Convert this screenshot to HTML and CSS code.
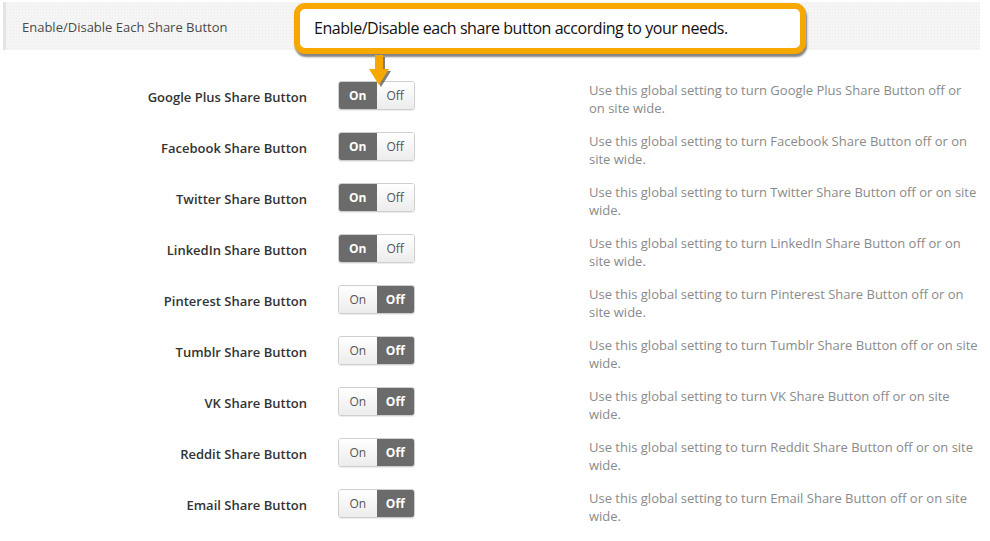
FILE: index.html
```html
<!DOCTYPE html>
<html lang="en">
<head>
<meta charset="UTF-8">
<meta name="viewport" content="width=device-width, initial-scale=1.0">
<title>Share Buttons</title>
<link rel="stylesheet" href="styles.css">
</head>
<body>
<div class="page">
    <div class="section-head">Enable/Disable Each Share Button</div>

    <div class="callout">
        <div class="callout-box">Enable/Disable each share button according to your needs.</div>
        <svg class="callout-arrow" width="26" height="34" viewBox="0 0 26 34">
            <path d="M7 0 h8 v14 h6 l-10 16 l-10 -16 h6 z" fill="#2a2a2a" opacity="0.6" transform="translate(2,2)"/>
            <path d="M7 0 h8 v14 h6 l-10 16 l-10 -16 h6 z" fill="#f7a800"/>
        </svg>
    </div>

    <div class="rows">
        <div class="row">
            <div class="label">Google Plus Share Button</div>
            <div class="toggle"><span class="seg active">On</span><span class="seg">Off</span></div>
            <div class="desc">Use this global setting to turn Google Plus Share Button off or on site wide.</div>
        </div>
        <div class="row">
            <div class="label">Facebook Share Button</div>
            <div class="toggle"><span class="seg active">On</span><span class="seg">Off</span></div>
            <div class="desc">Use this global setting to turn Facebook Share Button off or on site wide.</div>
        </div>
        <div class="row">
            <div class="label">Twitter Share Button</div>
            <div class="toggle"><span class="seg active">On</span><span class="seg">Off</span></div>
            <div class="desc">Use this global setting to turn Twitter Share Button off or on site wide.</div>
        </div>
        <div class="row">
            <div class="label">LinkedIn Share Button</div>
            <div class="toggle"><span class="seg active">On</span><span class="seg">Off</span></div>
            <div class="desc">Use this global setting to turn LinkedIn Share Button off or on site wide.</div>
        </div>
        <div class="row">
            <div class="label">Pinterest Share Button</div>
            <div class="toggle"><span class="seg">On</span><span class="seg active">Off</span></div>
            <div class="desc">Use this global setting to turn Pinterest Share Button off or on site wide.</div>
        </div>
        <div class="row">
            <div class="label">Tumblr Share Button</div>
            <div class="toggle"><span class="seg">On</span><span class="seg active">Off</span></div>
            <div class="desc">Use this global setting to turn Tumblr Share Button off or on site wide.</div>
        </div>
        <div class="row">
            <div class="label">VK Share Button</div>
            <div class="toggle"><span class="seg">On</span><span class="seg active">Off</span></div>
            <div class="desc">Use this global setting to turn VK Share Button off or on site wide.</div>
        </div>
        <div class="row">
            <div class="label">Reddit Share Button</div>
            <div class="toggle"><span class="seg">On</span><span class="seg active">Off</span></div>
            <div class="desc">Use this global setting to turn Reddit Share Button off or on site wide.</div>
        </div>
        <div class="row">
            <div class="label">Email Share Button</div>
            <div class="toggle"><span class="seg">On</span><span class="seg active">Off</span></div>
            <div class="desc">Use this global setting to turn Email Share Button off or on site wide.</div>
        </div>
    </div>
</div>
</body>
</html>
```

FILE: styles.css
```css
body {
    margin: 0;
    padding: 0;
    background-color: #fff;
    font-family: "Open Sans", "Noto Sans", sans-serif;
}

.page {
    position: relative;
    width: 990px;
    height: 541px;
    overflow: hidden;
}

/* barra gris de la cabecera */
.section-head {
    margin: 2px 10px 0 3px;
    height: 48px;
    box-sizing: border-box;
    padding: 16px 0 0 16px;
    background-color: #f5f5f5;
    background-image: radial-gradient(#ebebeb 0.6px, transparent 0.7px);
    background-size: 3px 3px;
    border-left: 3px solid #e4e4e4;
    font-size: 13px;
    color: #4a4a4a;
}

.callout {
    position: absolute;
    top: 3px;
    left: 294px;
}

.callout-box {
    width: 500px;
    height: 39px;
    border: 6px solid #f7a800;
    border-radius: 11px;
    background-color: #fff;
    box-shadow: 1px 3px 2px rgba(30, 30, 30, 0.55);
    font-size: 16px;
    letter-spacing: -0.45px;
    line-height: 39px;
    text-indent: 14px;
    color: #111;
}

.callout-arrow {
    position: absolute;
    top: 52px;
    left: 74px;
}

.rows {
    margin-top: 31px;
}

.row {
    display: grid;
    grid-template-columns: 338px 251px 1fr;
    align-items: start;
    height: 51px;
}

.label {
    text-align: right;
    padding-right: 31px;
    padding-top: 2px;
    line-height: 29px;
    font-size: 13px;
    font-weight: 600;
    color: #333;
}

.toggle {
    display: flex;
    width: 77px;
    height: 29px;
    box-sizing: border-box;
    border: 1px solid #cfcfcf;
    border-radius: 3px;
    overflow: hidden;
    box-shadow: 0 1px 1px rgba(0, 0, 0, 0.08);
}

.seg {
    flex: 1;
    text-align: center;
    line-height: 27px;
    font-size: 12px;
    color: #555;
    background: linear-gradient(#ffffff, #ececec);
}

.seg.active {
    background: #6b6b6b;
    color: #fff;
    font-weight: 700;
}

.desc {
    width: 389px;
    font-size: 13px;
    line-height: 18px;
    color: #8a8a8a;
}
```
